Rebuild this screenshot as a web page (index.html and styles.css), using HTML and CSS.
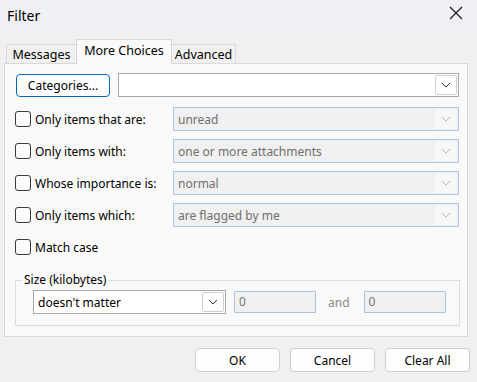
FILE: index.html
```html
<!DOCTYPE html>
<html>
<head>
<meta charset="utf-8">
<link rel="stylesheet" href="styles.css">
</head>
<body>
<div class="dialog">
  <div class="titlebar">
    <span class="title">Filter</span>
    <svg class="close" width="14" height="14" viewBox="0 0 14 14"><path d="M1 1 L13 13 M13 1 L1 13" stroke="#1a1a1a" stroke-width="1.2" fill="none"/></svg>
  </div>
  <div class="tabs">
    <div class="tab t-msg">Messages</div>
    <div class="tab active t-more">More Choices</div>
    <div class="tab t-adv">Advanced</div>
  </div>
  <div class="panel">
    <div class="row cat-row">
      <button class="btn default">Categories...</button>
      <div class="combo grow">
        <span class="combo-text"></span>
        <span class="drop"><svg width="10" height="6" viewBox="0 0 10 6"><path d="M1 1 L5 5 L9 1" stroke="#333" fill="none"/></svg></span>
      </div>
    </div>
    <div class="row opt">
      <label class="check"><span class="box"></span>Only items that are:</label>
      <div class="combo disabled grow"><span class="combo-text">unread</span><span class="drop"><svg width="10" height="6" viewBox="0 0 10 6"><path d="M1 1 L5 5 L9 1" stroke="#b5b5b5" fill="none"/></svg></span></div>
    </div>
    <div class="row opt">
      <label class="check"><span class="box"></span>Only items with:</label>
      <div class="combo disabled grow"><span class="combo-text">one or more attachments</span><span class="drop"><svg width="10" height="6" viewBox="0 0 10 6"><path d="M1 1 L5 5 L9 1" stroke="#b5b5b5" fill="none"/></svg></span></div>
    </div>
    <div class="row opt">
      <label class="check"><span class="box"></span>Whose importance is:</label>
      <div class="combo disabled grow"><span class="combo-text">normal</span><span class="drop"><svg width="10" height="6" viewBox="0 0 10 6"><path d="M1 1 L5 5 L9 1" stroke="#b5b5b5" fill="none"/></svg></span></div>
    </div>
    <div class="row opt">
      <label class="check"><span class="box"></span>Only items which:</label>
      <div class="combo disabled grow"><span class="combo-text">are flagged by me</span><span class="drop"><svg width="10" height="6" viewBox="0 0 10 6"><path d="M1 1 L5 5 L9 1" stroke="#b5b5b5" fill="none"/></svg></span></div>
    </div>
    <div class="row opt">
      <label class="check"><span class="box"></span>Match case</label>
    </div>
    <fieldset class="group">
      <legend>Size (kilobytes)</legend>
      <div class="size-row">
        <div class="combo size-combo"><span class="combo-text">doesn't matter</span><span class="drop"><svg width="10" height="6" viewBox="0 0 10 6"><path d="M1 1 L5 5 L9 1" stroke="#333" fill="none"/></svg></span></div>
        <div class="input">0</div>
        <span class="and">and</span>
        <div class="input">0</div>
      </div>
    </fieldset>
  </div>
  <div class="buttons">
    <button class="btn action">OK</button>
    <button class="btn action">Cancel</button>
    <button class="btn action">Clear All</button>
  </div>
</div>
</body>
</html>
```

FILE: styles.css
```css
* { box-sizing: border-box; }
html, body { margin: 0; padding: 0; }
body {
  width: 477px;
  height: 382px;
  background: #f0f0f0;
  font-family: "Noto Sans", "Open Sans", sans-serif;
  font-size: 12px;
  color: #000;
  overflow: hidden;
}
.dialog { width: 477px; height: 382px; }
.titlebar {
  height: 30px;
  background: #eef0f5;
  display: flex;
  align-items: center;
  justify-content: space-between;
  padding: 0 14px 0 7px;
}
.title { font-size: 14px; }
.close { display: block; margin-top: -4px; }
.tabs {
  display: flex;
  align-items: flex-end;
  height: 33px;
  padding-left: 6px;
  position: relative;
  z-index: 1;
}
.tab {
  height: 19px;
  border: 1px solid #d9d9d9;
  border-bottom: none;
  background: #f0f0f0;
  line-height: 19px;
  font-size: 12.5px;
  text-align: center;
  white-space: nowrap;
}
.t-msg { width: 71px; }
.t-more { width: 96px; margin-left: -1px; }
.t-adv { width: 65px; margin-left: -1px; }
.tab.active {
  background: #f9f9f9;
  line-height: 22px;
  margin-bottom: -1px;
  height: 25px;
}
.panel {
  margin: 0 9px 0 4px;
  height: 274px;
  border: 1px solid #dadada;
  background: #f9f9f9;
  padding: 9px 8px 0 11px;
}
.row { display: flex; align-items: center; }
.cat-row { height: 24px; gap: 8px; }
.opt { height: 24px; margin-top: 8px; }
.cat-row + .opt { margin-top: 10px; }
.btn {
  font-family: inherit;
  font-size: 12px;
  color: #000;
  background: #fdfdfd;
  border: 1px solid #d0d0d0;
  border-radius: 4px;
  padding: 0;
  height: 24px;
}
.btn.default {
  width: 94px;
  height: 23px;
  border-color: #0067c0;
}
.combo {
  height: 24px;
  border: 1px solid #a8a8a8;
  background: #fff;
  display: flex;
  align-items: center;
  justify-content: space-between;
  padding: 0 1px 0 4px;
}
.grow { flex: 1; }
.combo-text { white-space: nowrap; }
.drop {
  width: 22px;
  height: 20px;
  border: 1px solid #cfcfcf;
  border-radius: 2px;
  background: #fff;
  display: flex;
  align-items: center;
  justify-content: center;
}
.drop svg { display: block; }
.combo.disabled {
  border-color: #aec3dd;
  background: #f0f0f0;
  color: #6f6f6f;
}
.combo.disabled .drop { border: none; background: #f7f7f7; }
.check {
  display: flex;
  align-items: center;
  width: 158px;
  margin-left: -1px;
  white-space: nowrap;
}
.box {
  width: 16px;
  height: 16px;
  border: 1px solid #3a3a3a;
  border-radius: 3px;
  background: #fbfbfb;
  margin-right: 4px;
  flex: none;
}
.group {
  margin: 13px 0 0 -1px;
  width: 445px;
  border: 1px solid #dcdcdc;
  padding: 2px 0 11px 17px;
}
.group legend {
  padding: 0 2px;
  margin-left: -11px;
  line-height: 16px;
}
.size-row { display: flex; align-items: center; }
.size-combo { width: 193px; }
.input {
  width: 82px;
  height: 22px;
  border: 1px solid #aec3dd;
  background: #f0f0f0;
  color: #777;
  padding-left: 4px;
  line-height: 20px;
  margin-left: 8px;
}
.and { color: #8a8a8a; margin: 0 14px 0 12px; }
.and + .input { margin-left: 0; }
.buttons {
  display: flex;
  justify-content: flex-end;
  gap: 10px;
  padding-right: 7px;
  margin-top: 11px;
}
.btn.action { width: 85px; }
```
